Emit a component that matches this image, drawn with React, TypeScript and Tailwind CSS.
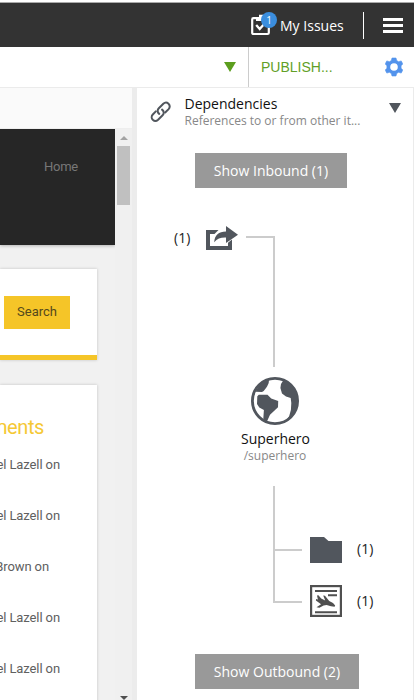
import React from 'react';

const comments = ['el Lazell on', 'el Lazell on', 'Brown on', 'el Lazell on', 'el Lazell on'];

function IssuesIcon() {
  return (
    <svg width="20" height="22" viewBox="0 0 20 22" fill="none">
      <rect x="1.2" y="4.2" width="16.6" height="15.8" rx="1.2" stroke="#fff" strokeWidth="2.2" />
      <path d="M5 3h3V0.8h4V3h2.5v4H5z" fill="#fff" />
      <path d="M5.2 11l3.5 4 5.8-6.5" stroke="#fff" strokeWidth="2.3" />
    </svg>
  );
}

function GearIcon() {
  return (
    <svg width="18" height="20" viewBox="0 0 18 20">
      <path
        d="M7 1h4l.7 2.6 1.9 1.1 2.6-.8 1.6 3-1.7 1.9v2.4l1.7 1.9-1.6 3-2.6-.8-1.9 1.1L11 19H7l-.7-2.6-1.9-1.1-2.6.8-1.6-3 1.7-1.9V8.8L.2 6.9l1.6-3 2.6.8 1.9-1.1z"
        fill="#5393ec"
        stroke="#5393ec"
        strokeWidth="0.6"
        strokeLinejoin="round"
      />
      <circle cx="9" cy="10" r="3.8" fill="#fff" />
    </svg>
  );
}

function LinkIcon() {
  return (
    <svg width="22" height="22" viewBox="0 0 22 22" fill="none" stroke="#51565d" strokeWidth="2" strokeLinecap="round">
      <path d="M9.2 12.9C7.2 11.3 7.2 8.9 8.8 7.3l4.5-4.5c1.6-1.5 3.7-1.5 5.2-.1 1.6 1.5 1.6 3.8.1 5.4l-3.4 3.4" />
      <path d="M12.1 8.6c2 1.6 2.1 4 .5 5.6l-4.5 4.5c-1.6 1.5-3.8 1.5-5.3.1-1.5-1.5-1.5-3.8 0-5.3l3-3.1" />
    </svg>
  );
}

function ShareIcon() {
  return (
    <svg width="32" height="25" viewBox="0 0 32 25">
      <path d="M0 4h12.5L8.5 8H4v12h18v-3.2l4-3.4V24H0z" fill="#51565d" />
      <path d="M8.2 16.2C8.7 9.2 12.6 5.7 20 5.6V0l12 8.7-12 8.2v-5.4c-5.2-.2-8.7 1.1-11.8 4.7z" fill="#51565d" />
    </svg>
  );
}

function GlobeIcon() {
  return (
    <svg width="48" height="48" viewBox="0 0 48 48">
      <circle cx="24" cy="24" r="22.6" fill="#fff" stroke="#51565d" strokeWidth="2.8" />
      <path
        d="M4.5 14.8C7 9 12 4.2 18 3l-.3 3-1.5 3.2-.8 1.2-2.7 3.6-1.7 1zM6.3 19.2l1.5-1.4h8.7l3.7 3.8 7 2.4-.2 6.2L19 37.8l-3.5 7.7-3.2-3.5.6-9L8.3 30.5 6 27zM32.5 3C41 6 46.6 14.5 46.6 24c0 8.5-4.3 15.3-10.8 19.5l2.4-4.5 1.7-6 .4-7-.6-5-4.7-1.6-4-3-1.6-5.4.6-4z"
        fill="#51565d"
      />
    </svg>
  );
}

function PageIcon() {
  return (
    <svg width="32" height="32" viewBox="0 0 32 32">
      <rect x="1.1" y="1.1" width="29.8" height="29.8" fill="#fff" stroke="#505050" strokeWidth="2.2" />
      <path d="M5 5h22v2H5zM18 9.3h9v2h-9zM5 26.3h22v2H5z" fill="#505050" />
      <path
        d="M7 10.6l1.4-.3 2.8 3.3 4 2-2-5.2 1.8.4 4.2 5.3 3.8 2 2.2 2.4-.6 1.2-3.6-.5-4.4-1.3-3 .7-4.2 2.2-2.9-.5 4.6-3-5.2-3.9.2-1.3 1.8.3z"
        fill="#505050"
      />
    </svg>
  );
}

function SitePreview() {
  return (
    <div className="flex h-[571px] w-[132px]">
      <div className="w-[115px] overflow-hidden bg-[#f1f1f1] font-['Roboto',sans-serif] text-[#606060]">
        <div className="h-[116px] bg-[#262626] pl-[44px] pt-[28px] text-[13px] leading-5 tracking-[-0.25px] text-[#777] shadow-[0_1px_3px_rgba(0,0,0,0.25)]">
          Home
        </div>
        <div className="mt-6 h-[91px] w-[97px] border-b-[5px] border-[#f5c528] bg-white pl-1 pt-[27px] shadow-[0_0_3px_rgba(0,0,0,0.2)]">
          <button className="flex h-[33px] w-[66px] items-center justify-center bg-[#f5c528] pb-[2px] text-[13px] text-[#54491c]">
            Search
          </button>
        </div>
        <div className="mt-[25px] h-[340px] w-[97px] bg-white pt-[28px] shadow-[0_0_3px_rgba(0,0,0,0.2)]">
          <div className="flex h-7 w-[44px] items-center justify-end whitespace-nowrap text-[20px] tracking-[-0.4px] text-[#f5c835]">
            ments
          </div>
          <div className="mt-[14px]">
            {comments.map((name, i) => (
              <div
                key={i}
                className={`flex h-[51px] justify-end whitespace-nowrap text-[13px] leading-5 tracking-[-0.1px] ${name === 'Brown on' ? 'w-[49px]' : 'w-[60px]'}`}
              >
                {name}
              </div>
            ))}
          </div>
        </div>
      </div>
      <div className="flex w-[17px] flex-col items-center bg-[#f0f0f0] pt-[7px]">
        <svg width="8" height="4" viewBox="0 0 8 4" fill="#a3a3a3"><path d="M0 4L4 0l4 4z" /></svg>
        <div className="mt-[6px] h-[59px] w-[13px] bg-[#c0c0c0]" />
        <svg className="mt-[491px]" width="8" height="4" viewBox="0 0 8 4" fill="#505050"><path d="M0 0h8L4 4z" /></svg>
      </div>
    </div>
  );
}

function DependenciesPanel() {
  return (
    <section className="flex h-[612px] w-[277px] flex-col border-r border-[#ebebeb] bg-white">
      <div className="flex h-[65px] pl-[13px] pr-3">
        <div className="mt-[13px]"><LinkIcon /></div>
        <div className="ml-[12.5px] mt-[6px] w-[190px] whitespace-nowrap">
          <div className="text-[14px] leading-5 text-[#111]">Dependencies</div>
          <div className="-mt-[1px] text-[12px] leading-4 text-[#888]">References to or from other it...</div>
        </div>
        <svg className="ml-auto mt-[15px]" width="12" height="10" viewBox="0 0 12 10" fill="#51565d"><path d="M0 0h12L6 10z" /></svg>
      </div>
      <button className="ml-[58px] h-[35px] w-[152px] bg-[#999] text-[14px] text-white">Show Inbound (1)</button>
      <div className="mt-[38px] flex h-[141px]">
        <span className="ml-[37px] mt-[2px] w-[32px] text-[14px] leading-5 text-[#222]">(1)</span>
        <ShareIcon />
        <div className="ml-2 mt-[10px] h-[131px] w-[29px] border-r-2 border-t-2 border-[#ccc]" />
      </div>
      <div className="mt-[10px] flex flex-col items-center">
        <GlobeIcon />
        <div className="mt-[4px] pl-px text-[14px] leading-5 text-[#111]">Superhero</div>
        <div className="-mt-px text-[12px] leading-4 text-[#888]">/superhero</div>
      </div>
      <div className="mt-[22px] flex h-[132px]">
        <div className="ml-[136px] h-[117px] w-[29px] border-b-2 border-l-2 border-[#ccc] pt-[63px]">
          <div className="h-[2px] bg-[#ccc]" />
        </div>
        <div className="ml-2 mt-[51px] w-8">
          <svg width="32" height="26" viewBox="0 0 32 26" fill="#51565d"><path d="M0 0h14l4.5 4H32v22H0z" /></svg>
          <div className="mt-[22px]"><PageIcon /></div>
        </div>
        <div className="ml-[15px] mt-[53px] text-[14px] leading-5 text-[#222]">
          <div>(1)</div>
          <div className="mt-8">(1)</div>
        </div>
      </div>
      <button className="ml-[58px] mt-[36px] h-[35px] w-[164px] bg-[#999] text-[14px] text-white">Show Outbound (2)</button>
    </section>
  );
}

export default function App() {
  return (
    <div className="h-[700px] w-[414px] overflow-hidden bg-white pt-[2px] font-['Open_Sans','Noto_Sans',sans-serif]">
      <header className="flex h-[45px] items-center border-t border-[#aaa] bg-[#333] pl-[251px] text-white">
        <div className="relative">
          <IssuesIcon />
          <span className="absolute -top-[2px] left-[10px] flex h-4 w-4 items-center justify-center rounded-full bg-[#3b8ede] text-[10px] leading-none">1</span>
        </div>
        <span className="ml-[9px] whitespace-nowrap text-[14px] tracking-[0.02px]">My Issues</span>
        <div className="ml-auto h-[27px] w-px bg-white" />
        <div className="ml-[19px] mr-[11px] flex w-5 flex-col gap-[3px]">
          <div className="h-[3px] bg-white" />
          <div className="h-[3px] bg-white" />
          <div className="h-[3px] bg-white" />
        </div>
      </header>
      <div className="flex h-[41px] border-b border-[#ebebeb]">
        <div className="flex w-[249px] items-center justify-end border-r border-[#ccc] pr-3">
          <svg width="12" height="10" viewBox="0 0 12 10" fill="#5c9e1f"><path d="M0 0h12L6 10z" /></svg>
        </div>
        <div className="flex flex-1 items-center pl-3 pr-[11px]">
          <span className="font-['Liberation_Sans',Arial,sans-serif] text-[14px] text-[#629f27]">PUBLISH...</span>
          <div className="ml-auto"><GearIcon /></div>
        </div>
      </div>
      <main className="flex">
        <div>
          <div className="h-[41px] w-[132px] border-b border-[#eee] bg-[#fafafa]" />
          <SitePreview />
        </div>
        <div className="h-[612px] w-[5px] bg-[#ececec]" />
        <DependenciesPanel />
      </main>
    </div>
  );
}
